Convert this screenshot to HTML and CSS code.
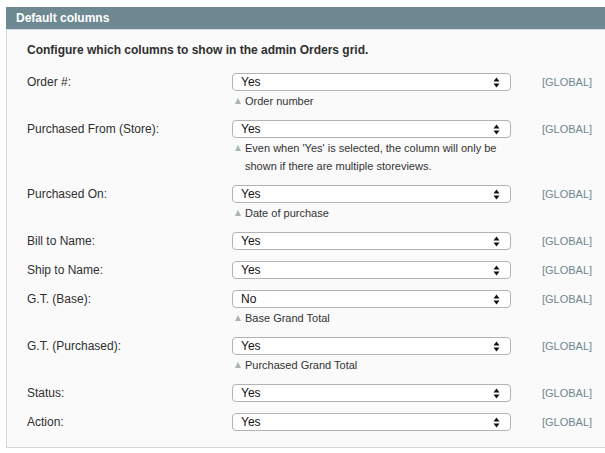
FILE: index.html
```html
<!DOCTYPE html>
<html>
<head>
<meta charset="utf-8">
<link rel="stylesheet" href="styles.css">
</head>
<body>
<div class="section">
  <div class="section-head">Default columns</div>
  <div class="section-body">
    <div class="intro">Configure which columns to show in the admin Orders grid.</div>
    <div class="rows">
      <div class="row">
        <div class="label">Order #:</div>
        <div class="value">
          <div class="select"><span>Yes</span><svg class="arrows" width="7" height="11" viewBox="0 0 7 11"><path d="M3.5 0.5L6.5 4.5H0.5Z M3.5 10.5L6.5 6.5H0.5Z" fill="#111"/></svg></div>
          <div class="hint">Order number</div>
        </div>
        <div class="scope">[GLOBAL]</div>
      </div>
      <div class="row">
        <div class="label">Purchased From (Store):</div>
        <div class="value">
          <div class="select"><span>Yes</span><svg class="arrows" width="7" height="11" viewBox="0 0 7 11"><path d="M3.5 0.5L6.5 4.5H0.5Z M3.5 10.5L6.5 6.5H0.5Z" fill="#111"/></svg></div>
          <div class="hint">Even when 'Yes' is selected, the column will only be shown if there are multiple storeviews.</div>
        </div>
        <div class="scope">[GLOBAL]</div>
      </div>
      <div class="row">
        <div class="label">Purchased On:</div>
        <div class="value">
          <div class="select"><span>Yes</span><svg class="arrows" width="7" height="11" viewBox="0 0 7 11"><path d="M3.5 0.5L6.5 4.5H0.5Z M3.5 10.5L6.5 6.5H0.5Z" fill="#111"/></svg></div>
          <div class="hint">Date of purchase</div>
        </div>
        <div class="scope">[GLOBAL]</div>
      </div>
      <div class="row">
        <div class="label">Bill to Name:</div>
        <div class="value">
          <div class="select"><span>Yes</span><svg class="arrows" width="7" height="11" viewBox="0 0 7 11"><path d="M3.5 0.5L6.5 4.5H0.5Z M3.5 10.5L6.5 6.5H0.5Z" fill="#111"/></svg></div>
        </div>
        <div class="scope">[GLOBAL]</div>
      </div>
      <div class="row">
        <div class="label">Ship to Name:</div>
        <div class="value">
          <div class="select"><span>Yes</span><svg class="arrows" width="7" height="11" viewBox="0 0 7 11"><path d="M3.5 0.5L6.5 4.5H0.5Z M3.5 10.5L6.5 6.5H0.5Z" fill="#111"/></svg></div>
        </div>
        <div class="scope">[GLOBAL]</div>
      </div>
      <div class="row">
        <div class="label">G.T. (Base):</div>
        <div class="value">
          <div class="select"><span>No</span><svg class="arrows" width="7" height="11" viewBox="0 0 7 11"><path d="M3.5 0.5L6.5 4.5H0.5Z M3.5 10.5L6.5 6.5H0.5Z" fill="#111"/></svg></div>
          <div class="hint">Base Grand Total</div>
        </div>
        <div class="scope">[GLOBAL]</div>
      </div>
      <div class="row">
        <div class="label">G.T. (Purchased):</div>
        <div class="value">
          <div class="select"><span>Yes</span><svg class="arrows" width="7" height="11" viewBox="0 0 7 11"><path d="M3.5 0.5L6.5 4.5H0.5Z M3.5 10.5L6.5 6.5H0.5Z" fill="#111"/></svg></div>
          <div class="hint">Purchased Grand Total</div>
        </div>
        <div class="scope">[GLOBAL]</div>
      </div>
      <div class="row">
        <div class="label">Status:</div>
        <div class="value">
          <div class="select"><span>Yes</span><svg class="arrows" width="7" height="11" viewBox="0 0 7 11"><path d="M3.5 0.5L6.5 4.5H0.5Z M3.5 10.5L6.5 6.5H0.5Z" fill="#111"/></svg></div>
        </div>
        <div class="scope">[GLOBAL]</div>
      </div>
      <div class="row">
        <div class="label">Action:</div>
        <div class="value">
          <div class="select"><span>Yes</span><svg class="arrows" width="7" height="11" viewBox="0 0 7 11"><path d="M3.5 0.5L6.5 4.5H0.5Z M3.5 10.5L6.5 6.5H0.5Z" fill="#111"/></svg></div>
        </div>
        <div class="scope">[GLOBAL]</div>
      </div>
    </div>
  </div>
</div>
</body>
</html>
```

FILE: styles.css
```css
html, body {
  background: #ffffff;
}
body {
  margin: 7px 0 0 6px;
  font-family: "Liberation Sans", Arial, Helvetica, sans-serif;
  font-size: 12px;
  color: #333;
}
.section {
  width: 599px;
}
.section-head {
  background: #6f8992;
  color: #fff;
  font-weight: bold;
  font-size: 12px;
  height: 22px;
  line-height: 22px;
  padding-left: 10px;
  border-bottom: 1px solid #d3dde1;
}
.section-body {
  background: #fafafa;
  border-left: 1px solid #d6d6d6;
  border-bottom: 1px solid #d6d6d6;
  padding: 11px 0 10px 20px;
}
.intro {
  font-weight: bold;
  line-height: 18px;
  color: #2f2f2f;
  margin-bottom: 9px;
}
.row {
  display: grid;
  grid-template-columns: 205px 279px 80px;
  padding: 5px 0 6px;
}
.label {
  line-height: 18px;
  color: #2f2f2f;
}
.select {
  height: 18px;
  box-sizing: border-box;
  background: #fff;
  border: 1px solid #b3b3b3;
  border-radius: 4px;
  display: flex;
  align-items: center;
  justify-content: space-between;
  padding: 0 10px 0 8px;
  font-size: 12px;
  color: #111;
}
.arrows {
  display: block;
}
.hint {
  position: relative;
  font-size: 11px;
  line-height: 18px;
  margin-top: 1px;
  margin-bottom: -1px;
  padding-left: 13px;
  padding-right: 10px;
  color: #333;
}
.hint::before {
  content: "";
  position: absolute;
  left: 3px;
  top: 6px;
  border-left: 3.5px solid transparent;
  border-right: 3.5px solid transparent;
  border-bottom: 6px solid #a9b4b8;
}
.scope {
  padding-left: 31px;
  font-size: 11px;
  line-height: 18px;
  color: #6f8791;
}
```
